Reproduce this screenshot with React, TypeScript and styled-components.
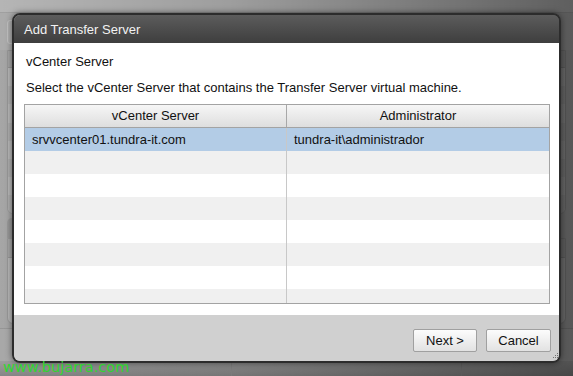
import React from "react"
import styled, { createGlobalStyle } from "styled-components"

const GlobalStyle = createGlobalStyle`
  html, body {
    margin: 0;
    padding: 0;
    overflow: hidden;
  }
  body {
    font-family: "Liberation Sans", Arial, sans-serif;
  }
`

const Screen = styled.div`
  position: relative;
  width: 573px;
  height: 376px;
  overflow: hidden;
  background: #cfcfcf;
  display: flex;
  flex-direction: column;
`

// ---- background application (dimmed behind the modal) ----

const AppHeader = styled.div`
  height: 12px;
  background: #e2e2e2;
  border-bottom: 1px solid #c8c8c8;
`

const Toolbar = styled.div`
  height: 37px;
  display: flex;
  align-items: center;
  padding: 0 7px;
  background: #d6d6d6;
`

const ToolButton = styled.div`
  width: 60px;
  height: 22px;
  border: 1px solid #f0f0f0;
  border-radius: 3px;
  background: #dcdcdc;
`

const Panel = styled.div<{ $height: number }>`
  height: ${(p) => p.$height}px;
  margin: 0 7px;
  border: 1px solid #bdbdbd;
  border-radius: 0 0 6px 6px;
  background: #e4e4e4;
  display: flex;
  flex-direction: column;
  overflow: hidden;
`

const PanelHead = styled.div`
  height: 18px;
  background: #cfcfcf;
  border-bottom: 1px solid #bbb;
`

const PanelRow = styled.div<{ $odd?: boolean }>`
  height: 20px;
  background: ${(p) => (p.$odd ? "#dadada" : "#e6e6e6")};
`

const TabStrip = styled.div`
  height: 20px;
  margin: 4px 7px 0;
  display: flex;
`

const Tab = styled.div`
  width: 80px;
  border-radius: 5px 5px 0 0;
  background: #bdbdbd;
`

const StatusBar = styled.div`
  height: 32px;
  margin-top: 4px;
  display: grid;
  grid-template-columns: 232px 230px 1fr;
  border-top: 1px solid #bbb;
  background: #d2d2d2;
`

const StatusCell = styled.div`
  border-right: 1px solid #b0b0b0;
`

const BottomBar = styled.div`
  flex: 1;
  background: linear-gradient(#c4c4c4, #a8a8a8);
  display: grid;
  grid-template-columns: 232px 230px 1fr;
`

const Shade = styled.div`
  position: absolute;
  inset: 0;
  background: linear-gradient(
    to right,
    rgba(0, 0, 0, 0.2),
    rgba(0, 0, 0, 0.3) 40%,
    rgba(0, 0, 0, 0.58)
  );
`

// ---- modal dialog ----

const Dialog = styled.div`
  position: absolute;
  left: 12px;
  top: 13px;
  width: 545px;
  height: 346px;
  border: 2px solid #2c2c2c;
  border-radius: 8px;
  overflow: hidden;
  display: flex;
  flex-direction: column;
  box-shadow: 0 0 6px rgba(0, 0, 0, 0.5);
`

const TitleBar = styled.div`
  height: 28px;
  padding: 0 10px;
  display: flex;
  align-items: center;
  font-size: 13px;
  color: #f2f2f2;
  background: linear-gradient(#5c5c5c, #3e3e3e);
`

const Body = styled.div`
  flex: 1;
  background: #fff;
  padding: 11px 9px 10px 10px;
  display: flex;
  flex-direction: column;
`

const Heading = styled.div`
  font-size: 13px;
  line-height: 16px;
  color: #111;
  padding-left: 2px;
`

const Description = styled.div`
  margin-top: 10px;
  font-size: 13px;
  line-height: 16px;
  color: #111;
  padding-left: 2px;
`

const Grid = styled.div`
  margin-top: 8px;
  height: 198px;
  border: 1px solid #a3a3a3;
  overflow: hidden;
`

const GridRow = styled.div<{ $tone: "head" | "selected" | "stripe" | "plain" }>`
  display: grid;
  grid-template-columns: 262px 1fr;
  height: ${(p) => (p.$tone === "head" ? 22 : 23)}px;
  border-bottom: ${(p) => (p.$tone === "head" ? "1px solid #a3a3a3" : "none")};
  background: ${(p) =>
    p.$tone === "head"
      ? "linear-gradient(#f6f6f6, #dedede)"
      : p.$tone === "selected"
      ? "#b3cce6"
      : p.$tone === "stripe"
      ? "#f0f0f0"
      : "#fff"};
`

const Cell = styled.div<{ $head?: boolean }>`
  padding: 0 7px;
  font-size: 13px;
  line-height: ${(p) => (p.$head ? 22 : 23)}px;
  color: #111;
  text-align: ${(p) => (p.$head ? "center" : "left")};
  white-space: nowrap;
  border-right: 1px solid ${(p) => (p.$head ? "#a8a8a8" : "#c8c8c8")};
  &:last-child {
    border-right: none;
  }
`

const Footer = styled.div`
  position: relative;
  height: 46px;
  background: #d0d0d0;
  display: flex;
  justify-content: flex-end;
  align-items: flex-start;
  gap: 9px;
  padding: 14px 8px 0 0;
  box-sizing: border-box;
`

const Button = styled.button<{ $width: number }>`
  width: ${(p) => p.$width}px;
  height: 23px;
  padding: 0;
  border: 1px solid #a0a0a0;
  border-radius: 2px;
  background: linear-gradient(#fcfcfc, #e2e2e2);
  font-family: "Liberation Sans", Arial, sans-serif;
  font-size: 13px;
  color: #111;
`

const Grip = styled.svg`
  position: absolute;
  right: 0;
  bottom: 0;
`

const Watermark = styled.div`
  position: absolute;
  left: 3px;
  bottom: 1px;
  font-family: "DejaVu Sans", sans-serif;
  font-size: 14.5px;
  line-height: 15px;
  color: #2fd62f;
`

const rows: { server: string; admin: string }[] = [
  { server: "srvvcenter01.tundra-it.com", admin: "tundra-it\\administrador" },
]

export default function App() {
  const filler = Array.from({ length: 8 }, (_, i) => i)

  return (
    <>
      <GlobalStyle />
      <Screen>
        <AppHeader />
        <Toolbar>
          <ToolButton />
        </Toolbar>
        <Panel $height={162}>
          <PanelHead />
          {filler.map((i) => (
            <PanelRow key={i} $odd={i % 2 === 1} />
          ))}
        </Panel>
        <TabStrip>
          <Tab />
        </TabStrip>
        <Panel $height={84}>
          <PanelHead />
        </Panel>
        <StatusBar>
          <StatusCell />
          <StatusCell />
          <div />
        </StatusBar>
        <BottomBar>
          <StatusCell />
          <StatusCell />
          <div />
        </BottomBar>
        <Shade />

        <Dialog>
          <TitleBar>Add Transfer Server</TitleBar>
          <Body>
            <Heading>vCenter Server</Heading>
            <Description>
              Select the vCenter Server that contains the Transfer Server virtual machine.
            </Description>
            <Grid>
              <GridRow $tone="head">
                <Cell $head>vCenter Server</Cell>
                <Cell $head>Administrator</Cell>
              </GridRow>
              {filler.map((i) => {
                const row = rows[i]
                return (
                  <GridRow
                    key={i}
                    $tone={row ? "selected" : i % 2 === 1 ? "stripe" : "plain"}
                  >
                    <Cell>{row?.server}</Cell>
                    <Cell>{row?.admin}</Cell>
                  </GridRow>
                )
              })}
            </Grid>
          </Body>
          <Footer>
            <Button $width={64}>Next &gt;</Button>
            <Button $width={65}>Cancel</Button>
            <Grip width="10" height="10" viewBox="0 0 10 10">
              <g fill="#707070">
                <rect x="8" y="2" width="1" height="1" />
                <rect x="6" y="4" width="1" height="1" />
                <rect x="8" y="4" width="1" height="1" />
                <rect x="4" y="6" width="1" height="1" />
                <rect x="6" y="6" width="1" height="1" />
                <rect x="8" y="6" width="1" height="1" />
              </g>
            </Grip>
          </Footer>
        </Dialog>
        <Watermark>www.bujarra.com</Watermark>
      </Screen>
    </>
  )
}
